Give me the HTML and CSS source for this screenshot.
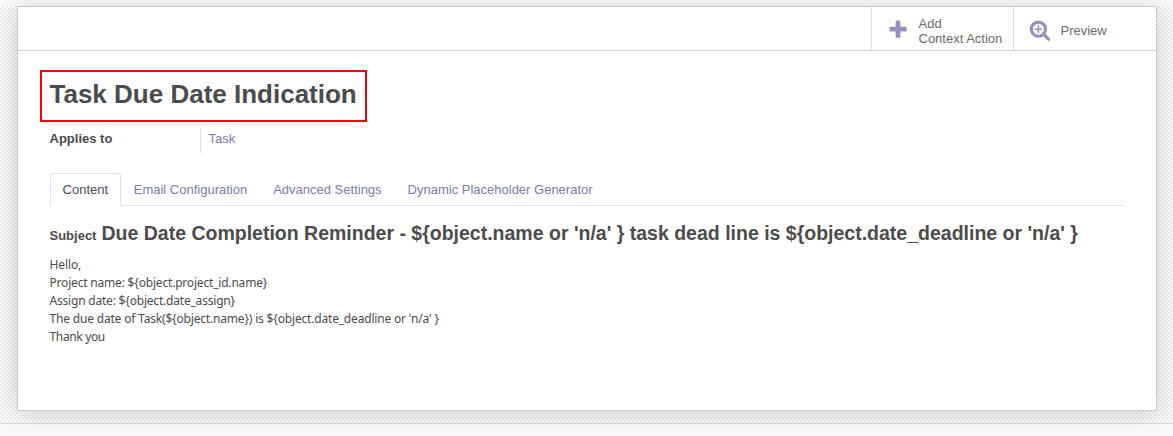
FILE: index.html
```html
<!DOCTYPE html>
<html lang="en">
<head>
<meta charset="utf-8">
<title>Task Due Date Indication</title>
<link rel="stylesheet" href="styles.css">
</head>
<body>
<main class="backdrop">
  <section class="sheet">
    <div class="button-box">
      <button class="stat-button stat-add">
        <svg class="icon" viewBox="0 0 1792 1792"><path d="M1600 736v192q0 40-28 68t-68 28h-416v416q0 40-28 68t-68 28h-192q-40 0-68-28t-28-68v-416h-416q-40 0-68-28t-28-68v-192q0-40 28-68t68-28h416v-416q0-40 28-68t68-28h192q40 0 68 28t28 68v416h416q40 0 68 28t28 68z"/></svg>
        <span>Add<br>Context Action</span>
      </button>
      <button class="stat-button stat-preview">
        <svg class="icon" viewBox="0 0 1792 1792"><path d="M1088 800v64q0 13-9.5 22.5t-22.5 9.5h-224v224q0 13-9.5 22.5t-22.5 9.5h-64q-13 0-22.5-9.5t-9.5-22.5v-224h-224q-13 0-22.5-9.5t-9.5-22.5v-64q0-13 9.5-22.5t22.5-9.5h224v-224q0-13 9.5-22.5t22.5-9.5h64q13 0 22.5 9.5t9.5 22.5v224h224q13 0 22.5 9.5t9.5 22.5zm128 32q0-185-131.5-316.5t-316.5-131.5-316.5 131.5-131.5 316.5 131.5 316.5 316.5 131.5 316.5-131.5 131.5-316.5zm512 832q0 53-37.5 90.5t-90.5 37.5q-54 0-90-38l-343-342q-179 124-399 124-143 0-273.5-55.5t-225-150-150-225-55.5-273.5 55.5-273.5 150-225 225-150 273.5-55.5 273.5 55.5 225 150 150 225 55.5 273.5q0 220-124 399l343 343q37 37 37 90z"/></svg>
        <span>Preview</span>
      </button>
    </div>
    <div class="content">
      <h1 class="title">Task Due Date Indication</h1>
      <div class="field">
        <span class="field-label">Applies to</span>
        <a class="field-value">Task</a>
      </div>
      <nav class="tabs">
        <a class="tab tab-active">Content</a>
        <a class="tab">Email Configuration</a>
        <a class="tab">Advanced Settings</a>
        <a class="tab">Dynamic Placeholder Generator</a>
      </nav>
      <h2 class="subject"><span class="subject-label">Subject</span><span class="subject-text">Due Date Completion Reminder - ${object.name or 'n/a' } task dead line is ${object.date_deadline or 'n/a' }</span></h2>
      <div class="message">
        <p class="greeting">Hello,</p>
        <p class="project">Project name: ${object.project_id.name}</p>
        <p class="assigned">Assign date: ${object.date_assign}</p>
        <p class="deadline">The due date of Task(${object.name}) is ${object.date_deadline or 'n/a' }</p>
        <p class="closing">Thank you</p>
      </div>
    </div>
  </section>
</main>
</body>
</html>
```
FILE: styles.css
```css
* { box-sizing: border-box; }

body {
  margin: 0;
  padding-top: 6px;
  height: 436px;
  overflow: hidden;
  background: #f8f8f8;
  color: #4c4c4c;
  font: 13px/18px "Liberation Sans", Arial, sans-serif;
}

.backdrop {
  height: 418px;
  padding: 0 16px 0 17px;
  border-bottom: 1px solid #d8d8d8;
  background: repeating-conic-gradient(#ebebeb 0 25%, #fbfbfb 0 50%) 0 0 / 4px 4px;
}

.sheet {
  height: 405px;
  border: 1px solid #c8c8d3;
  background: #fff;
  box-shadow: 0 2px 20px rgba(0, 0, 0, 0.15);
}

.button-box {
  display: flex;
  justify-content: flex-end;
  height: 44px;
  border-bottom: 1px solid #cfd4dc;
}

.stat-button {
  display: flex;
  align-items: center;
  margin: 0;
  padding: 3px 0 0 14.5px;
  border: 0;
  border-left: 1px solid #dcdce2;
  background: none;
  color: #6c6c6c;
  font: 13px/15px "Liberation Sans", Arial, sans-serif;
  text-align: left;
}

.stat-add { width: 142px; padding-top: 5px; padding-left: 15px; }
.stat-preview { width: 143px; padding-left: 15px; }

.icon {
  width: 22px;
  height: 22px;
  margin: -1px 9.5px 0 0;
  fill: #9791bd;
}

.stat-add .icon { margin: -3px 9.5px 0 0; }

.content { padding: 19px 32px 0 22px; }

.title {
  width: 327px;
  height: 52px;
  margin: 0;
  padding: 0 0 4px 7.5px;
  border: 2px solid #f00;
  font-size: 26px;
  line-height: 44px;
  white-space: nowrap;
}

.field {
  display: flex;
  height: 24px;
  margin: 7px 0 0 9.5px;
  line-height: 20px;
}

.field-label {
  width: 150px;
  font-weight: bold;
}

.field-value {
  padding-left: 8px;
  border-left: 1px solid #ddd;
  color: #7c7bad;
}

.tabs {
  display: flex;
  height: 33px;
  margin: 20px 0 0 10px;
  border-bottom: 1px solid #dee2e6;
}

.tab {
  height: 33px;
  padding: 8px 13px 0;
  color: #7c7bad;
  white-space: nowrap;
}

.tab-active {
  padding: 7px 11.6px 0;
  border: 1px solid #dee2e6;
  border-bottom-color: #fff;
  border-radius: 3px 3px 0 0;
  background: #fff;
  color: #495057;
}

.subject {
  margin: 15px 0 0 9.5px;
  font-size: 19.5px;
  line-height: 24px;
  white-space: nowrap;
}

.subject-label {
  margin-right: 5px;
  font-size: 13px;
}

.message {
  margin: 8px 0 0 9.5px;
  font: 12px/18px "Noto Sans", sans-serif;
}

.message p { margin: 0; white-space: nowrap; }
.greeting { letter-spacing: -0.1px; }
.project { letter-spacing: -0.19px; }
.assigned { letter-spacing: -0.2px; }
.deadline { letter-spacing: -0.18px; }
.closing { letter-spacing: -0.35px; }
```
